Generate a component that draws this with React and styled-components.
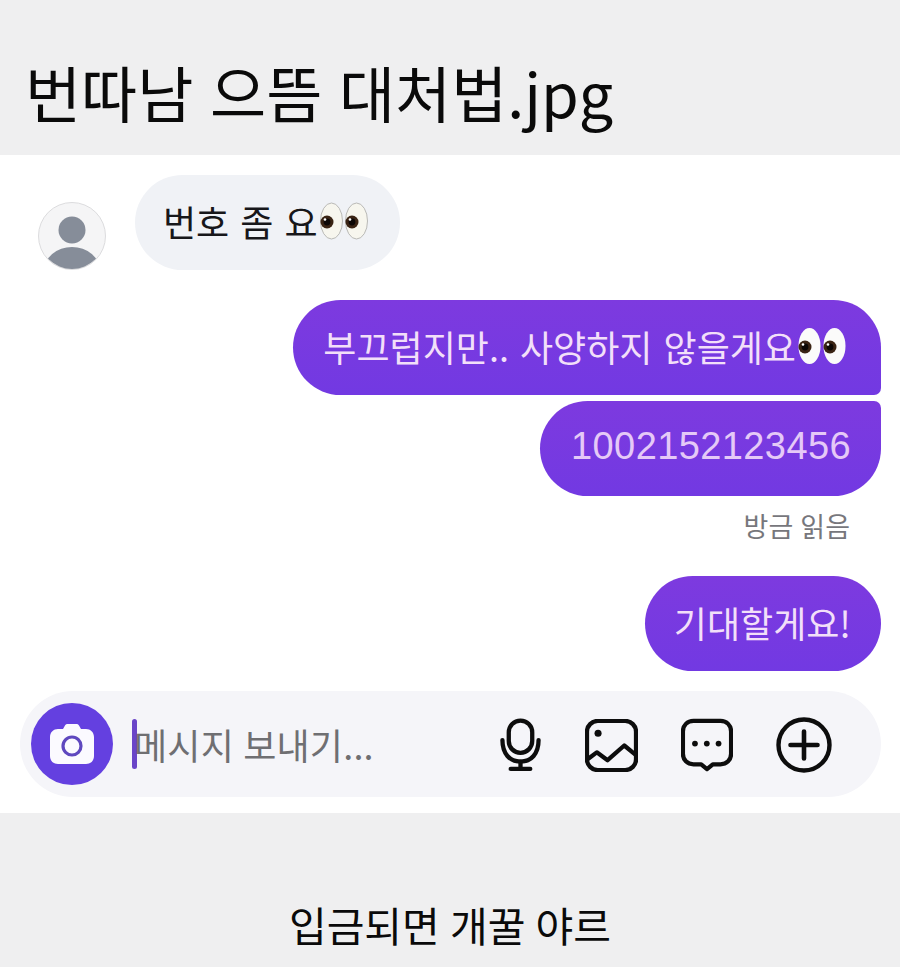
import React from 'react';
import styled, { createGlobalStyle } from 'styled-components';

const GlobalStyle = createGlobalStyle`
  html, body {
    margin: 0;
    padding: 0;
    background: #fff;
  }
  body {
    font-family: "Liberation Sans", "Noto Sans CJK KR", sans-serif;
  }
`;

const Page = styled.div`
  width: 900px;
  height: 967px;
  display: flex;
  flex-direction: column;
  overflow: hidden;
`;

const Header = styled.header`
  height: 155px;
  box-sizing: border-box;
  padding: 0 0 0 25px;
  background: #efeff0;
  display: flex;
  align-items: center;
`;

const Title = styled.h1`
  margin: 28px 0 0;
  font-family: "Noto Sans CJK KR", sans-serif;
  font-size: 61px;
  font-weight: 400;
  line-height: 80px;
  word-spacing: 3px;
  color: #0a0a0a;
  white-space: nowrap;
`;

const Chat = styled.main`
  height: 658px;
  box-sizing: border-box;
  padding: 20px 19px 0 38px;
  background: #fff;
  display: flex;
  flex-direction: column;
`;

const IncomingRow = styled.div`
  display: flex;
  align-items: flex-end;
  gap: 29px;
`;

const Avatar = styled.div`
  width: 68px;
  height: 68px;
  box-sizing: border-box;
  border-radius: 50%;
  border: 1px solid #dcdcde;
  background: #f5f5f6;
  overflow: hidden;
  display: flex;
`;

const Bubble = styled.div`
  height: 95px;
  box-sizing: border-box;
  padding: 0 ${(p) => p.$padRight}px 4px ${(p) => p.$padLeft}px;
  display: inline-flex;
  align-items: center;
  font-family: "Noto Sans CJK KR", sans-serif;
  font-size: 36px;
  word-spacing: 3px;
  white-space: pre;
  color: ${(p) => (p.$mine ? '#f2dff9' : '#17171a')};
  background: ${(p) => (p.$mine ? 'linear-gradient(#7d3adf, #7239e2)' : '#f0f2f6')};
  border-radius: ${(p) => p.$corners || '48px'};
`;

const Numbers = styled.span`
  font-family: "Liberation Sans", sans-serif;
  font-size: 38px;
  letter-spacing: 0.4px;
  color: #e5c9f7;
`;

const Outgoing = styled.div`
  display: flex;
  flex-direction: column;
  align-items: flex-end;
  gap: 6px;
  margin-top: ${(p) => p.$top}px;
`;

const ReadMark = styled.div`
  margin: 8px 31px 0 0;
  height: 32px;
  font-family: "Noto Sans CJK KR", sans-serif;
  font-size: 27px;
  line-height: 32px;
  word-spacing: 1px;
  color: #77777c;
`;

const Composer = styled.div`
  height: 106px;
  width: 861px;
  box-sizing: border-box;
  margin: 20px 0 0 -18px;
  padding: 0 49px 0 11px;
  border-radius: 53px;
  background: #f5f5f9;
  display: flex;
  align-items: center;
`;

const CameraButton = styled.div`
  width: 82px;
  height: 82px;
  flex: none;
  border-radius: 50%;
  background: #6440e0;
  display: flex;
  align-items: center;
  justify-content: center;
`;

const Caret = styled.div`
  width: 5px;
  height: 50px;
  flex: none;
  margin-left: 19px;
  border-radius: 3px;
  background: #6a45c8;
`;

const Placeholder = styled.span`
  flex: 1;
  margin-left: -3px;
  font-family: "Noto Sans CJK KR", sans-serif;
  font-size: 36px;
  letter-spacing: 0.2px;
  word-spacing: 1px;
  color: #6f6f72;
  white-space: nowrap;
`;

const Tools = styled.div`
  display: flex;
  align-items: center;
  gap: 43px;
  margin-top: 2px;
`;

const Footer = styled.footer`
  flex: 1;
  background: #efeff0;
  display: flex;
  align-items: flex-end;
  justify-content: center;
  padding-bottom: 17px;
`;

const Caption = styled.p`
  margin: 0;
  font-family: "Noto Sans CJK KR", sans-serif;
  font-size: 41px;
  line-height: 52px;
  word-spacing: 1px;
  color: #0a0a0a;
`;

// one pair of eyes, drawn since the system has no colour emoji font
const Eyes = ({ pale }) => (
  <svg width="50" height="38" viewBox="0 0 50 38" style={{ flex: 'none', marginLeft: 1 }}>
    {[0, 25].map((x) => (
      <g key={x} transform={`translate(${x} 0)`}>
        <ellipse cx="12.5" cy="19" rx="11" ry="18" fill={pale ? '#fbfbfa' : '#f7f6ee'} stroke={pale ? 'none' : '#b9b9b6'} strokeWidth="1" />
        <circle cx="8" cy="20" r="6.5" fill="#3a2414" />
        <circle cx="8" cy="20" r="3.4" fill="#0c0705" />
        <circle cx="6" cy="17.5" r="1.3" fill="#fff" />
      </g>
    ))}
  </svg>
);

const PersonIcon = () => (
  <svg width="66" height="66" viewBox="0 0 66 66">
    <circle cx="33" cy="27" r="13.5" fill="#868d99" />
    <ellipse cx="33" cy="68" rx="28" ry="24" fill="#868d99" />
  </svg>
);

const CameraIcon = () => (
  <svg width="46" height="42" viewBox="0 0 46 42">
    <path
      d="M9 6h5l2-3.5C16.7 1.3 17.6 1 19 1h8c1.4 0 2.3.3 3 1.5L32 6h5c4.4 0 8 3 8 8v19c0 5-3.6 8-8 8H9c-4.4 0-8-3-8-8V14c0-5 3.6-8 8-8z"
      fill="#fbfaff"
    />
    <circle cx="23" cy="23" r="9" fill="none" stroke="#5f48bf" strokeWidth="3.2" />
  </svg>
);

const MicIcon = () => (
  <svg width="43" height="54" viewBox="0 0 44 54" fill="none" stroke="#0d0d0d" strokeWidth="4" strokeLinecap="round">
    <rect x="10" y="2" width="24" height="33" rx="12" strokeWidth="4.4" />
    <path d="M3.5 22c0 14 7.5 22 18.5 22s18.5-8 18.5-22" strokeWidth="4.4" />
    <path d="M22 44v7M12 51.5h20" strokeWidth="4.4" />
  </svg>
);

const ImageIcon = () => (
  <svg width="53" height="53" viewBox="0 0 54 54" fill="none" stroke="#0d0d0d" strokeWidth="4.4" strokeLinejoin="round" strokeLinecap="round">
    <rect x="2" y="2" width="50" height="50" rx="11" />
    <circle cx="13.3" cy="14.5" r="3.6" fill="#0d0d0d" stroke="none" />
    <path d="M4 40l8-6 11 8 17-15 11 9" />
  </svg>
);

const ChatIcon = () => (
  <svg width="52" height="54" viewBox="0 0 54 54" fill="none">
    <path
      d="M13 2h28c6.5 0 11 4.5 11 11v23c0 6.5-4.5 11-11 11h-8l-6 5-6-5h-8C6.5 47 2 42.5 2 36V13C2 6.5 6.5 2 13 2z"
      stroke="#0d0d0d"
      strokeWidth="4.4"
      strokeLinejoin="round"
    />
    <circle cx="14.5" cy="25.5" r="3" fill="#0d0d0d" />
    <circle cx="26.8" cy="25.5" r="3" fill="#0d0d0d" />
    <circle cx="39" cy="25.5" r="3" fill="#0d0d0d" />
  </svg>
);

const PlusIcon = () => (
  <svg width="56" height="56" viewBox="0 0 56 56" fill="none" stroke="#0d0d0d" strokeLinecap="round">
    <circle cx="28" cy="28" r="25.5" strokeWidth="4.4" />
    <path d="M14.5 28h27M28 14.5v27" strokeWidth="4.6" />
  </svg>
);

const App = () => (
  <Page>
    <GlobalStyle />
    <Header>
      <Title>번따남 으뜸 대처법.jpg</Title>
    </Header>
    <Chat>
      <IncomingRow>
        <Avatar>
          <PersonIcon />
        </Avatar>
        <Bubble $padLeft={28} $padRight={31}>
          번호 좀 요
          <Eyes />
        </Bubble>
      </IncomingRow>
      <Outgoing $top={30}>
        <Bubble $mine $padLeft={30} $padRight={34} $corners="48px 48px 7px 48px">
          부끄럽지만.. 사양하지 않을게요
          <Eyes pale />
        </Bubble>
        <Bubble $mine $padLeft={31} $padRight={30} $corners="48px 7px 48px 48px">
          <Numbers>1002152123456</Numbers>
        </Bubble>
        <ReadMark>방금 읽음</ReadMark>
      </Outgoing>
      <Outgoing $top={34}>
        <Bubble $mine $padLeft={29} $padRight={30}>
          기대할게요!
        </Bubble>
      </Outgoing>
      <Composer>
        <CameraButton>
          <CameraIcon />
        </CameraButton>
        <Caret />
        <Placeholder>메시지 보내기...</Placeholder>
        <Tools>
          <MicIcon />
          <ImageIcon />
          <ChatIcon />
          <PlusIcon />
        </Tools>
      </Composer>
    </Chat>
    <Footer>
      <Caption>입금되면 개꿀 야르</Caption>
    </Footer>
  </Page>
);

export default App;
